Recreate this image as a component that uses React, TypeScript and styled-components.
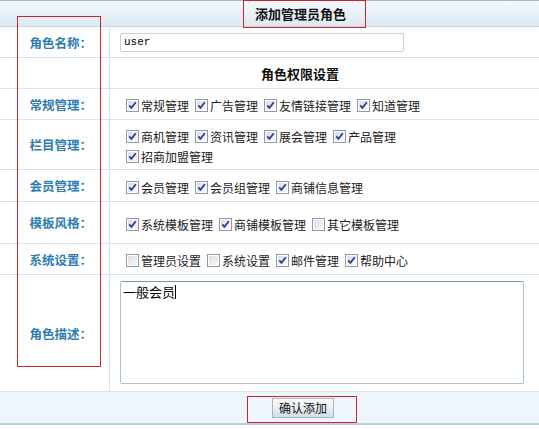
import React from "react";
import styled, { createGlobalStyle } from "styled-components";

const GlobalStyle = createGlobalStyle`
  html, body {
    margin: 0;
    padding: 0;
    background: #fff;
    overflow: hidden;
  }
  body {
    font-family: "Noto Sans CJK SC", "DejaVu Sans", sans-serif;
    font-size: 12px;
    color: #222;
  }
`;

type Perm = { name: string; on: boolean };

const groups: { label: string; height: number; lines: Perm[][] }[] = [
  {
    label: "常规管理",
    height: 31,
    lines: [
      [
        { name: "常规管理", on: true },
        { name: "广告管理", on: true },
        { name: "友情链接管理", on: true },
        { name: "知道管理", on: true },
      ],
    ],
  },
  {
    label: "栏目管理",
    height: 50,
    lines: [
      [
        { name: "商机管理", on: true },
        { name: "资讯管理", on: true },
        { name: "展会管理", on: true },
        { name: "产品管理", on: true },
      ],
      [{ name: "招商加盟管理", on: true }],
    ],
  },
  {
    label: "会员管理",
    height: 32,
    lines: [
      [
        { name: "会员管理", on: true },
        { name: "会员组管理", on: true },
        { name: "商铺信息管理", on: true },
      ],
    ],
  },
  {
    label: "模板风格",
    height: 42,
    lines: [
      [
        { name: "系统模板管理", on: true },
        { name: "商铺模板管理", on: true },
        { name: "其它模板管理", on: false },
      ],
    ],
  },
  {
    label: "系统设置",
    height: 31,
    lines: [
      [
        { name: "管理员设置", on: false },
        { name: "系统设置", on: false },
        { name: "邮件管理", on: true },
        { name: "帮助中心", on: true },
      ],
    ],
  },
];

function CheckBox({ on }: { on: boolean }) {
  return (
    <Box>
      <svg width="13" height="13" viewBox="0 0 13 13">
        <defs>
          <linearGradient id="cbg" x1="0" y1="0" x2="1" y2="1">
            <stop offset="0" stopColor="#d9dee3" />
            <stop offset="1" stopColor="#f8f9fa" />
          </linearGradient>
        </defs>
        <rect x="0.5" y="0.5" width="12" height="12" fill="#fff" stroke="#8e9ba6" />
        <rect x="2" y="2" width="9" height="9" fill="url(#cbg)" />
        {on && (
          <path
            d="M3.3 6.4 L5.4 8.8 L9.8 3.2"
            fill="none"
            stroke="#2a3f8f"
            strokeWidth="1.8"
          />
        )}
      </svg>
    </Box>
  );
}

export default function App() {
  return (
    <Page>
      <GlobalStyle />
      <Table>
        <Header>添加管理员角色</Header>
        <Row $h={31}>
          <Label>角色名称：</Label>
          <Cell>
            <TextInput defaultValue="user" />
          </Cell>
        </Row>
        <Row $h={31}>
          <Label />
          <Cell>
            <SubTitle>角色权限设置</SubTitle>
          </Cell>
        </Row>
        {groups.map((g) => (
          <Row $h={g.height} key={g.label}>
            <Label>{g.label}：</Label>
            <Cell>
              <Lines>
                {g.lines.map((line, i) => (
                  <Line key={i}>
                    {line.map((p) => (
                      <Item key={p.name}>
                        <CheckBox on={p.on} />
                        <span>{p.name}</span>
                      </Item>
                    ))}
                  </Line>
                ))}
              </Lines>
            </Cell>
          </Row>
        ))}
        <Row $h={117}>
          <Label>角色描述：</Label>
          <Cell>
            <Memo>
              一般会员<Caret />
            </Memo>
          </Cell>
        </Row>
        <Footer>
          <Button>确认添加</Button>
        </Footer>
      </Table>
      <Mark style={{ left: 243, top: 0, width: 123, height: 28 }} />
      <Mark style={{ left: 17, top: 16, width: 84, height: 351 }} />
      <Mark style={{ left: 247, top: 396, width: 110, height: 27 }} />
    </Page>
  );
}

const Page = styled.div`
  position: relative;
  width: 539px;
  height: 429px;
`;

const Table = styled.div`
  display: flex;
  flex-direction: column;
  border-top: 1px solid #a9b7c2;
`;

const Header = styled.div`
  height: 25px;
  line-height: 25px;
  padding-left: 255px;
  font-size: 13px;
  font-weight: bold;
  color: #111;
  background: linear-gradient(#f4f8fb, #dde9f1);
  border-bottom: 1px solid #c4d6e2;
`;

const Row = styled.div<{ $h: number }>`
  display: grid;
  grid-template-columns: 110px 1fr;
  min-height: ${(p) => p.$h - 1}px;
  border-bottom: 1px solid #d6e4ed;
`;

const Label = styled.div`
  display: flex;
  align-items: center;
  justify-content: flex-end;
  padding-right: 17px;
  border-right: 1px solid #d6e4ed;
  color: #2f7cb2;
  font-size: 12.5px;
  font-weight: bold;
`;

const Cell = styled.div`
  display: flex;
  align-items: center;
  padding-left: 10px;
`;

const TextInput = styled.input`
  box-sizing: border-box;
  width: 284px;
  height: 19px;
  padding: 0 3px;
  border: 1px solid #c9d1d7;
  border-radius: 2px;
  font-family: "Liberation Mono", monospace;
  font-size: 11px;
  color: #000;
  outline: none;
`;

const SubTitle = styled.div`
  padding-left: 141px;
  font-size: 13px;
  font-weight: bold;
  color: #111;
`;

const Lines = styled.div`
  display: flex;
  flex-direction: column;
  padding-top: 3px;
`;

const Line = styled.div`
  display: flex;
  height: 20px;
  align-items: center;
`;

const Item = styled.label`
  display: inline-flex;
  align-items: center;
  margin-left: 4px;
  color: #222;
  & > span {
    margin-left: 2px;
  }
  & + & {
    margin-left: 4px;
  }
`;

const Box = styled.span`
  display: inline-flex;
  width: 13px;
  height: 13px;
`;

const Memo = styled.div`
  box-sizing: border-box;
  width: 404px;
  height: 103px;
  align-self: flex-start;
  margin-top: 6px;
  padding: 1px 2px;
  border: 1px solid #a9c3d5;
  border-top-color: #7a9ab2;
  border-radius: 2px;
  font-size: 13px;
  line-height: 17px;
  color: #000;
`;

const Caret = styled.span`
  display: inline-block;
  width: 1px;
  height: 14px;
  background: #000;
  vertical-align: -2px;
`;

const Footer = styled.div`
  display: flex;
  align-items: center;
  height: 31px;
  padding-left: 272px;
  background: #eef5fc;
  border-bottom: 2px solid #b8cfe0;
`;

const Button = styled.button`
  box-sizing: border-box;
  width: 62px;
  height: 20px;
  padding: 0;
  border: 1px solid #a7b6c2;
  background: linear-gradient(#fbfcfd, #e6edf2 55%, #d3dee6);
  font-family: "Noto Sans CJK SC", sans-serif;
  font-size: 12px;
  color: #111;
`;

const Mark = styled.div`
  position: absolute;
  box-sizing: border-box;
  border: 1px solid #c8262b;
  pointer-events: none;
`;
